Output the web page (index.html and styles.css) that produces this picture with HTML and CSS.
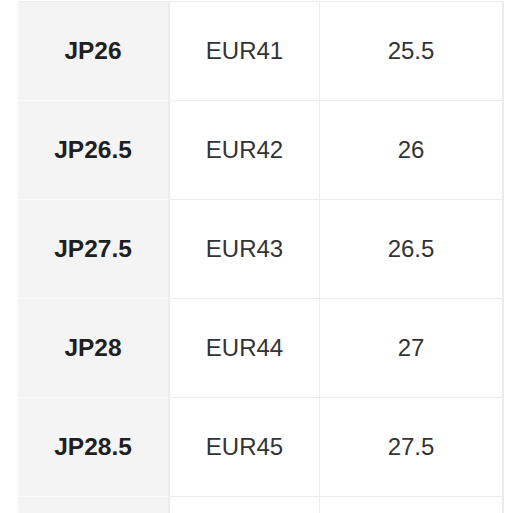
FILE: index.html
```html
<!DOCTYPE html>
<html lang="en">
<head>
<meta charset="utf-8">
<title>Size chart</title>
<link rel="stylesheet" href="styles.css">
</head>
<body>
<div class="size-table">
  <div class="cell head">JP26</div><div class="cell">EUR41</div><div class="cell last">25.5</div>
  <div class="cell head">JP26.5</div><div class="cell">EUR42</div><div class="cell last">26</div>
  <div class="cell head">JP27.5</div><div class="cell">EUR43</div><div class="cell last">26.5</div>
  <div class="cell head">JP28</div><div class="cell">EUR44</div><div class="cell last">27</div>
  <div class="cell head">JP28.5</div><div class="cell">EUR45</div><div class="cell last">27.5</div>
  <div class="cell head"></div><div class="cell"></div><div class="cell last"></div>
</div>
</body>
</html>
```
FILE: styles.css
```css
html, body {
  margin: 0;
  padding: 0;
  background: #ffffff;
}

body {
  font-family: "Liberation Sans", Arial, sans-serif;
  padding-top: 1px;
  height: 513px;
  overflow: hidden;
}

.size-table {
  display: grid;
  grid-template-columns: 152px 150px 184px;
  grid-auto-rows: 99px;
  margin-left: 18px;
  width: 486px;
  border-top: 1px solid #ececec;
}

.cell {
  display: flex;
  align-items: center;
  justify-content: center;
  font-size: 24px;
  color: #333333;
  border-bottom: 1px solid #ececec;
  border-right: 1px solid #ececec;
  box-sizing: border-box;
}

.cell.head {
  background: #f4f4f4;
  font-weight: bold;
  font-size: 24.5px;
  color: #1f1f1f;
  border-bottom-color: #fafafa;
  border-right: 2px solid #ececec;
}

.cell.last {
  border-right: 2px solid #ececec;
}
```
